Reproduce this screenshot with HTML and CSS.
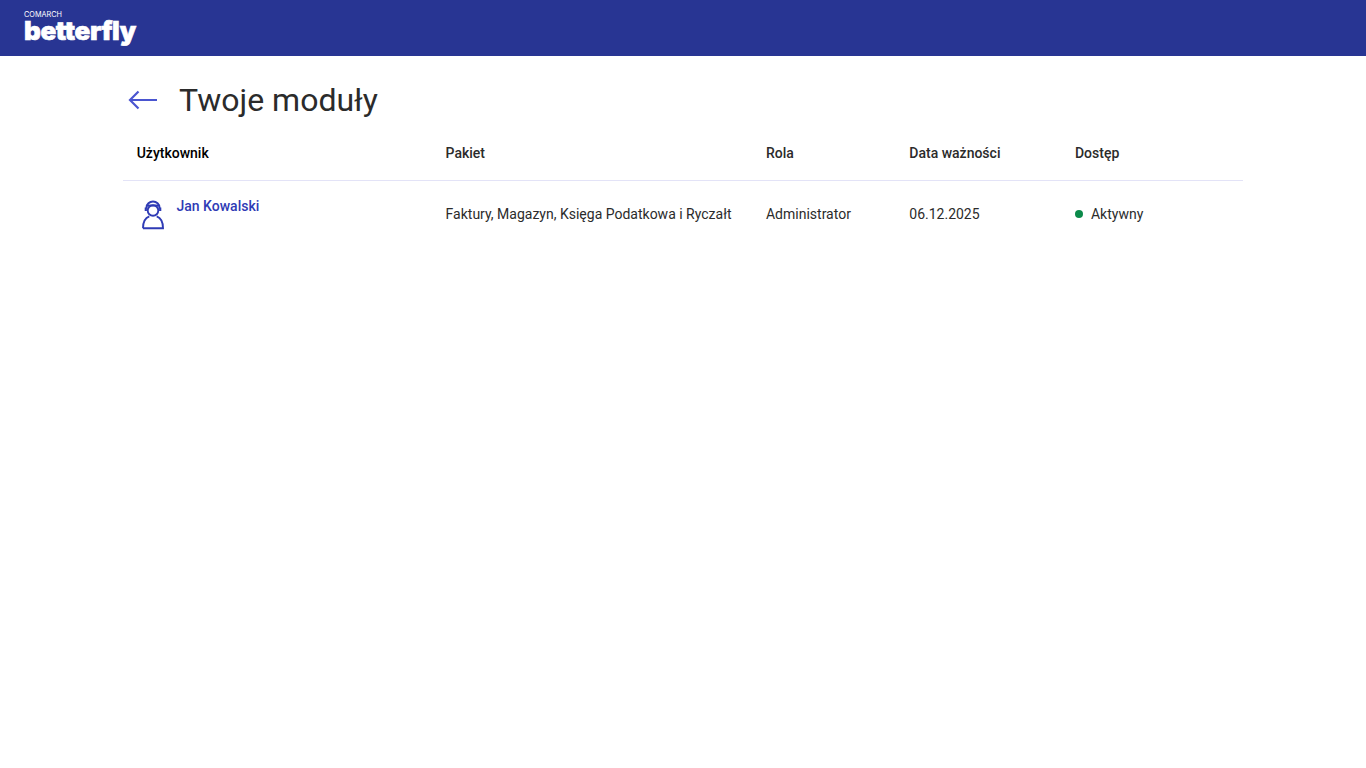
FILE: index.html
```html
<!DOCTYPE html>
<html lang="pl">
<head>
<meta charset="utf-8">
<title>Twoje moduły</title>
<link rel="stylesheet" href="styles.css">
</head>
<body>
<header class="topbar">
  <div class="logo">
    <span class="logo-small">COMARCH</span>
    <span class="logo-main">betterfly</span>
  </div>
</header>
<main class="content">
  <div class="title-row">
    <svg class="back" width="30" height="20" viewBox="0 0 30 20" fill="none" stroke="#4a55d0" stroke-width="2.200">
      <path d="M29 10H2M10.500 1.500L2 10l8.500 8.500"/>
    </svg>
    <h1 class="title">Twoje moduły</h1>
  </div>
  <div class="row head">
    <div class="cell first">Użytkownik</div>
    <div class="cell">Pakiet</div>
    <div class="cell">Rola</div>
    <div class="cell">Data ważności</div>
    <div class="cell">Dostęp</div>
  </div>
  <div class="row body-row">
    <div class="cell first user">
      <svg class="avatar" width="24" height="30" viewBox="0 0 24 30" fill="none" stroke="#2f3bb5" stroke-width="1.900">
        <path d="M5.500 8.500V7.500a6.500 6 0 0 1 13 0v1"/>
        <path d="M6 5.500h12"/>
        <circle cx="12" cy="10.500" r="5.300"/>
        <path d="M4.800 7.500v3.500M19.200 7.500v3.500" stroke-width="2.200"/>
        <path d="M2 28.200h20c0-7-3-10.700-6.300-11.900M8.300 16.300C5 17.500 2 21.200 2 28.200"/>
      </svg>
      <a class="name" href="#">Jan Kowalski</a>
    </div>
    <div class="cell">Faktury, Magazyn, Księga Podatkowa i Ryczałt</div>
    <div class="cell">Administrator</div>
    <div class="cell">06.12.2025</div>
    <div class="cell status"><span class="dot"></span>Aktywny</div>
  </div>
</main>
</body>
</html>
```
FILE: styles.css
```css
* { box-sizing: border-box; }
html, body { margin: 0; height: 100%; background: #fff; }
body { font-family: Roboto, "Liberation Sans", sans-serif; color: #2b2b2b; font-size: 14px; }
.topbar { height: 56px; background: #283593; padding: 11px 0 0 24px; color: #fff; }
.logo { display: flex; flex-direction: column; align-items: flex-start; }
.logo-small { font-size: 7.300px; line-height: 7px; font-family: Inter, Roboto, sans-serif; }
.logo-main { margin-top: 3px; font-family: Inter, Roboto, sans-serif; font-weight: 900; font-size: 26px; line-height: 20px; letter-spacing: -0.350px; -webkit-text-stroke: 0.6px #fff; }
.content { width: 1120px; margin-left: 123px; }
.title-row { display: flex; align-items: center; height: 88px; padding: 0 0 0 5px; }
.back { flex: none; }
.title { margin: 0 0 0 21px; font-weight: 400; font-size: 32px; line-height: 40px; color: #2b2b2b; }
.row { display: grid; grid-template-columns: 308.600px 320.400px 143.300px 165.700px 1fr; }
.head { height: 37px; font-weight: 500; border-bottom: 1px solid #e3e3f7; align-items: start; line-height: 18px; }
.head .first { color: #000; }
.cell { padding: 0 14px; }
.cell.first { padding-left: 13.700px; }
.body-row { height: 66px; align-items: center; }
.user { display: flex; align-items: flex-start; align-self: start; padding-top: 16px; }
.avatar { flex: none; margin: 3px 0 0 4px; }
.name { margin: 0 0 0 11.800px; color: #2f3bb5; font-weight: 500; text-decoration: none; line-height: 18px; }
.status { display: flex; align-items: center; }
.dot { width: 8px; height: 8px; border-radius: 50%; background: #0b8a4a; margin-right: 8px; }
```
